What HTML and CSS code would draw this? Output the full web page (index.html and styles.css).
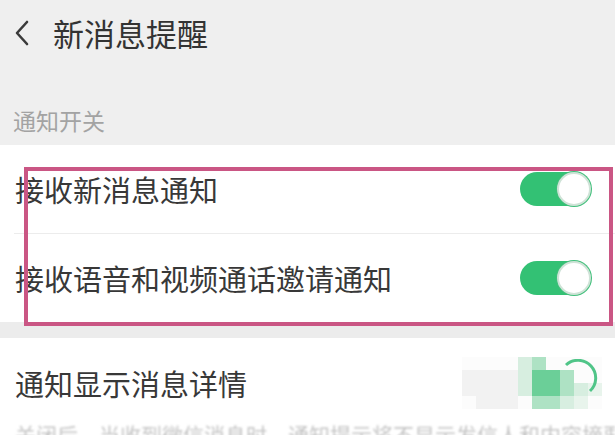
FILE: index.html
```html
<!DOCTYPE html>
<html lang="zh-CN">
<head>
<meta charset="utf-8">
<title>新消息提醒</title>
<link rel="stylesheet" href="styles.css">
</head>
<body>
<div class="page">
  <header class="header">
    <svg class="back" width="16" height="26" viewBox="0 0 16 26"><path d="M13 2 L3 13 L13 24" fill="none" stroke="#3a3a3a" stroke-width="2.6" stroke-linecap="round" stroke-linejoin="round"/></svg>
    <h1 class="title">新消息提醒</h1>
  </header>
  <div class="section-label">通知开关</div>
  <section class="card">
    <div class="row">
      <span class="row-text">接收新消息通知</span>
      <span class="toggle"><span class="knob"></span></span>
    </div>
    <div class="divider"></div>
    <div class="row">
      <span class="row-text">接收语音和视频通话邀请通知</span>
      <span class="toggle"><span class="knob"></span></span>
    </div>
    <div class="highlight"></div>
  </section>
  <div class="gap"></div>
  <section class="card card-last">
    <div class="row row-detail">
      <span class="row-text">通知显示消息详情</span>
      <div class="mosaic">
        <span class="w"></span><span class="w"></span><span class="w"></span><span class="w"></span><span class="m"></span><span class="l"></span><span class="w"></span><span class="w"></span><span class="w"></span><span class="w"></span>
        <span class="g"></span><span class="g"></span><span class="g"></span><span class="g"></span><span class="m"></span><span class="d"></span><span class="d"></span><span class="l"></span><span class="w"></span><span class="w"></span>
        <span class="g"></span><span class="g"></span><span class="g"></span><span class="g"></span><span class="m"></span><span class="d"></span><span class="d"></span><span class="l"></span><span class="m"></span><span class="m2"></span>
        <span class="w"></span><span class="g"></span><span class="g"></span><span class="g"></span><span class="w"></span><span class="l"></span><span class="l"></span><span class="m"></span><span class="m2"></span><span class="w"></span>
        <svg class="arc" width="40" height="40" viewBox="0 0 40 40"><path d="M6 6 A17 17 0 0 1 30 32" fill="none" stroke="#3ebf7c" stroke-width="3"/></svg>
      </div>
    </div>
    <p class="desc">关闭后，当收到微信消息时，通知提示将不显示发信人和内容摘要。</p>
  </section>
</div>
</body>
</html>
```
FILE: styles.css
```css
* { box-sizing: border-box; }
html, body {
  margin: 0;
  padding: 0;
  width: 615px;
  height: 435px;
  overflow: hidden;
  background: #efefef;
  font-family: "Noto Sans CJK SC", "Noto Sans", sans-serif;
}
.page {
  display: flex;
  flex-direction: column;
}
.header {
  height: 66px;
  display: flex;
  align-items: center;
  padding-left: 14px;
  gap: 23px;
}
.back { display: block; }
.title {
  margin: 0;
  font-size: 31px;
  font-weight: 400;
  color: #333;
  line-height: 40px;
}
.section-label {
  padding: 42px 13px 13px;
  font-size: 23px;
  line-height: 24px;
  color: #a3a3a3;
}
.card {
  background: #fff;
  position: relative;
}
.row {
  height: 88px;
  display: flex;
  align-items: center;
  justify-content: space-between;
  padding: 0 24px 0 15px;
}
.row-text {
  font-size: 29px;
  color: #383838;
  line-height: 36px;
}
.divider {
  height: 1px;
  margin-left: 14px;
  background: #ececec;
}
.toggle {
  width: 71px;
  height: 34px;
  border-radius: 17px;
  background: #33c174;
  display: flex;
  justify-content: flex-end;
  align-items: center;
}
.knob {
  width: 34px;
  height: 34px;
  border-radius: 50%;
  background: #fff;
  border: 2px solid #cfe3d7;
  box-shadow: 0 0 0 1px #3fbf7a;
}
.highlight {
  position: absolute;
  left: 24px;
  top: 22px;
  width: 589px;
  height: 159px;
  border: 4px solid #ca5684;
}
.gap {
  height: 16px;
  background: #ececec;
}
.card-last {
  height: 97px;
  overflow: hidden;
}
.row-detail {
  height: 90px;
  position: relative;
}
.mosaic {
  position: absolute;
  left: 462px;
  top: 19px;
  width: 140px;
  display: grid;
  grid-template-columns: repeat(10, 14px);
  grid-auto-rows: 13px;
  opacity: 0.9;
}
.mosaic .w { background: #fcfcfc; }
.mosaic .g { background: #f1f1f1; }
.mosaic .m { background: #d3eddd; }
.mosaic .m2 { background: #e6f3eb; }
.mosaic .l { background: #a6dfbe; }
.mosaic .d { background: #5bca8d; }
.arc {
  position: absolute;
  left: 98px;
  top: 2px;
}
.desc {
  margin: -6px 0 0;
  padding-left: 15px;
  font-size: 21px;
  line-height: 24px;
  color: #c4c4c4;
  filter: blur(1px);
  white-space: nowrap;
  overflow: hidden;
}
```
